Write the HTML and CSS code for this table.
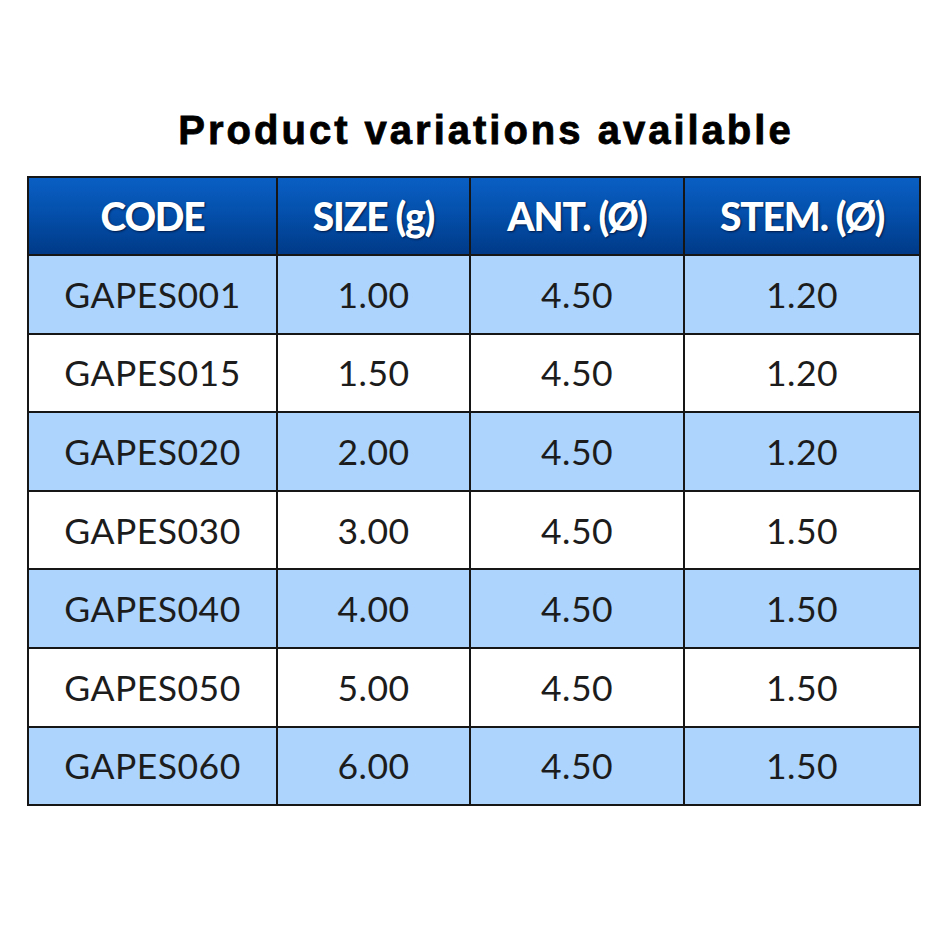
FILE: index.html
```html
<!DOCTYPE html>
<html>
<head>
<meta charset="utf-8">
<link rel="stylesheet" href="styles.css">
</head>
<body>
<div class="page">
  <h1 class="title">Product variations available</h1>
  <table class="variants">
    <colgroup>
      <col class="c1"><col class="c2"><col class="c3"><col class="c4">
    </colgroup>
    <thead>
      <tr><th>CODE</th><th>SIZE (g)</th><th>ANT. (Ø)</th><th>STEM. (Ø)</th></tr>
    </thead>
    <tbody>
      <tr class="alt"><td>GAPES001</td><td>1.00</td><td>4.50</td><td>1.20</td></tr>
      <tr><td>GAPES015</td><td>1.50</td><td>4.50</td><td>1.20</td></tr>
      <tr class="alt"><td>GAPES020</td><td>2.00</td><td>4.50</td><td>1.20</td></tr>
      <tr><td>GAPES030</td><td>3.00</td><td>4.50</td><td>1.50</td></tr>
      <tr class="alt"><td>GAPES040</td><td>4.00</td><td>4.50</td><td>1.50</td></tr>
      <tr><td>GAPES050</td><td>5.00</td><td>4.50</td><td>1.50</td></tr>
      <tr class="alt"><td>GAPES060</td><td>6.00</td><td>4.50</td><td>1.50</td></tr>
    </tbody>
  </table>
</div>
</body>
</html>
```

FILE: styles.css
```css
html, body {
  margin: 0;
  padding: 0;
  background: #ffffff;
}
.page {
  width: 950px;
  height: 950px;
  padding-top: 106px;
  box-sizing: border-box;
}
.title {
  margin: 0 0 22px 0;
  padding-left: 22px;
  text-align: center;
  font-family: "Liberation Sans", Arial, sans-serif;
  font-weight: bold;
  font-size: 40px;
  line-height: 48px;
  color: #000;
  letter-spacing: 3px;
  -webkit-text-stroke: 0.8px #000;
}
.variants {
  margin-left: 27px;
  border-collapse: collapse;
  table-layout: fixed;
  width: 894px;
  font-family: Lato, "DejaVu Sans", sans-serif;
}
.c1 { width: 249px; }
.c2 { width: 193px; }
.c3 { width: 214px; }
.c4 { width: 236px; }
.variants th,
.variants td {
  border: 2px solid #161616;
  text-align: center;
  padding: 0;
}
.variants th {
  height: 76px;
  background: linear-gradient(to bottom, #0a5fc4 0%, #0450ac 45%, #003a88 100%);
  color: #ffffff;
  font-weight: 900;
  font-size: 39px;
  letter-spacing: -1.2px;
  text-shadow: 1px 1px 2px rgba(0, 20, 60, 0.9);
}
.variants td {
  height: 76.6px;
  font-size: 35.5px;
  color: #1c1c1c;
  letter-spacing: 0.5px;
  background: #ffffff;
}
.variants tr.alt td {
  background: #acd4fc;
}
```
